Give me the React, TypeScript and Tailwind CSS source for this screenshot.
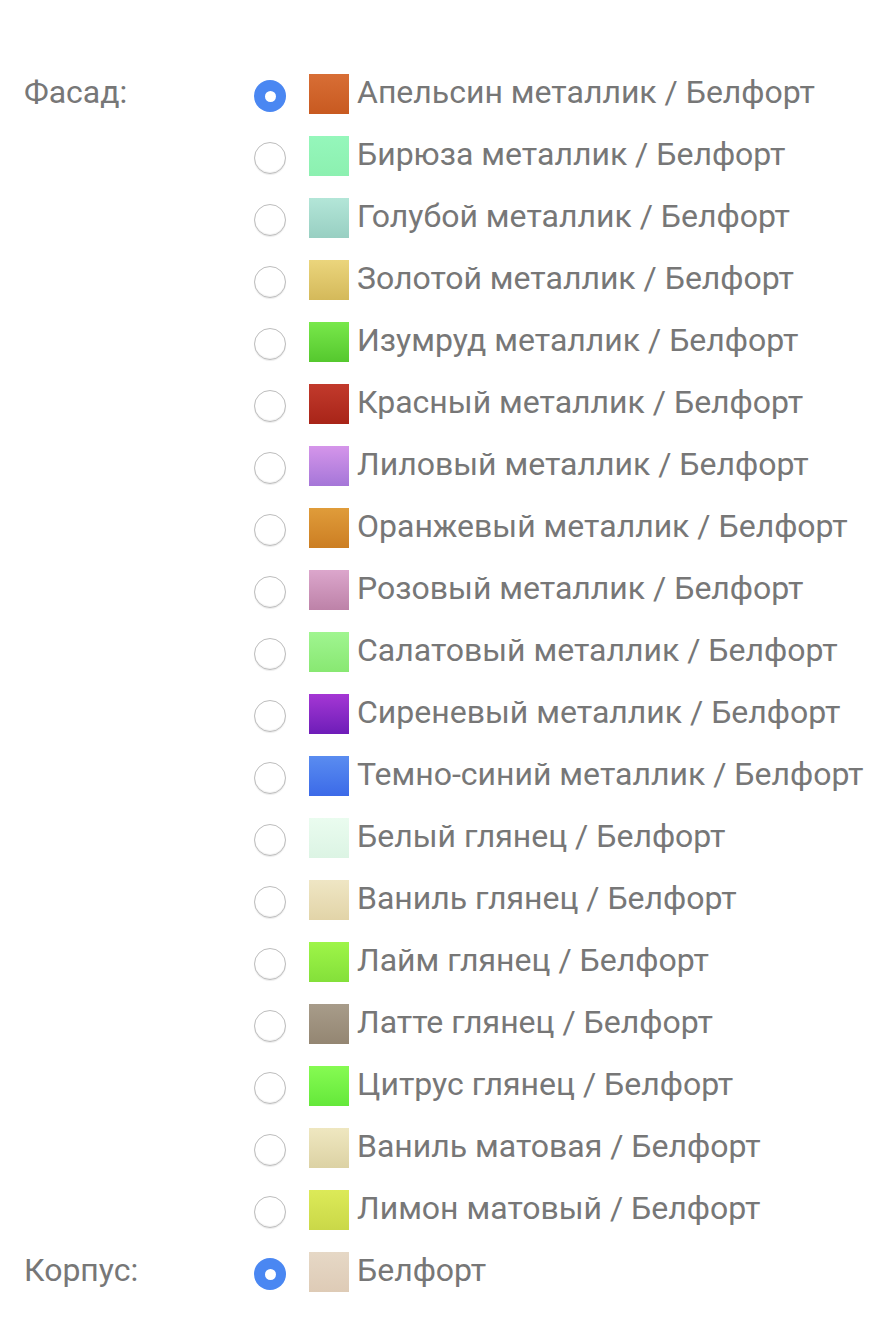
import React from "react";

type Opt = { name: string; sw: string };

const facade: Opt[] = [
  { name: "Апельсин металлик / Белфорт", sw: "bg-linear-to-b from-[#d86e35] to-[#c85a20]" },
  { name: "Бирюза металлик / Белфорт", sw: "bg-linear-to-b from-[#95f7bb] to-[#8cf0b0]" },
  { name: "Голубой металлик / Белфорт", sw: "bg-linear-to-b from-[#b3e6d8] to-[#98cfc2]" },
  { name: "Золотой металлик / Белфорт", sw: "bg-linear-to-b from-[#ebd57c] to-[#d4b95a]" },
  { name: "Изумруд металлик / Белфорт", sw: "bg-linear-to-b from-[#78e84a] to-[#55c82e]" },
  { name: "Красный металлик / Белфорт", sw: "bg-linear-to-b from-[#c23a2c] to-[#a82418]" },
  { name: "Лиловый металлик / Белфорт", sw: "bg-linear-to-b from-[#d595ea] to-[#a576d8]" },
  { name: "Оранжевый металлик / Белфорт", sw: "bg-linear-to-b from-[#e09c3a] to-[#cc7e22]" },
  { name: "Розовый металлик / Белфорт", sw: "bg-linear-to-b from-[#dca6cc] to-[#bd82a8]" },
  { name: "Салатовый металлик / Белфорт", sw: "bg-linear-to-b from-[#a0f590] to-[#88e872]" },
  { name: "Сиреневый металлик / Белфорт", sw: "bg-linear-to-b from-[#a536d4] to-[#6e1cb8]" },
  { name: "Темно-синий металлик / Белфорт", sw: "bg-linear-to-b from-[#5a8cf0] to-[#3c6ae8]" },
  { name: "Белый глянец / Белфорт", sw: "bg-linear-to-b from-[#eafcef] to-[#dcf4e4]" },
  { name: "Ваниль глянец / Белфорт", sw: "bg-linear-to-b from-[#efe6c4] to-[#e2d4a8]" },
  { name: "Лайм глянец / Белфорт", sw: "bg-linear-to-b from-[#9ef548] to-[#84e03a]" },
  { name: "Латте глянец / Белфорт", sw: "bg-linear-to-b from-[#a89c8a] to-[#948672]" },
  { name: "Цитрус глянец / Белфорт", sw: "bg-linear-to-b from-[#86fb52] to-[#64e83a]" },
  { name: "Ваниль матовая / Белфорт", sw: "bg-linear-to-b from-[#efe7c0] to-[#dcd2a4]" },
  { name: "Лимон матовый / Белфорт", sw: "bg-linear-to-b from-[#dcea58] to-[#cad848]" },
];

const body: Opt[] = [
  { name: "Белфорт", sw: "bg-linear-to-b from-[#e6d8c6] to-[#decbb6]" },
];

function Radio({ checked }: { checked: boolean }) {
  if (checked) {
    return (
      <span className="mt-1 flex h-8 w-8 shrink-0 items-center justify-center rounded-full bg-[#4a87f2]">
        <span className="h-[11px] w-[11px] rounded-full bg-white" />
      </span>
    );
  }
  return (
    <span className="mt-1 block h-8 w-8 shrink-0 rounded-full border border-[#bdbdbd] bg-white shadow-[inset_0_-1px_1px_rgba(0,0,0,0.06),0_1px_1px_rgba(0,0,0,0.08)]" />
  );
}

function Group({ label, opts }: { label: string; opts: Opt[] }) {
  return (
    <div className="flex">
      <div className="w-[254px] shrink-0 pl-6">
        <div className="flex h-[62px] items-center pb-1">{label}</div>
      </div>
      <div className="flex flex-col">
        {opts.map((o, i) => (
          <div key={o.name} className="flex h-[62px] items-center">
            <Radio checked={i === 0} />
            <span className={`ml-[23px] h-10 w-10 shrink-0 ${o.sw}`} />
            <span className="ml-[8px] whitespace-nowrap pb-1">{o.name}</span>
          </div>
        ))}
      </div>
    </div>
  );
}

export default function App() {
  return (
    <div
      className="min-h-[1328px] w-full bg-white pt-[63px] text-[32px] leading-none text-[#777777]"
      style={{ fontFamily: "Roboto, 'Liberation Sans', sans-serif" }}
    >
      <Group label="Фасад:" opts={facade} />
      <Group label="Корпус:" opts={body} />
    </div>
  );
}
